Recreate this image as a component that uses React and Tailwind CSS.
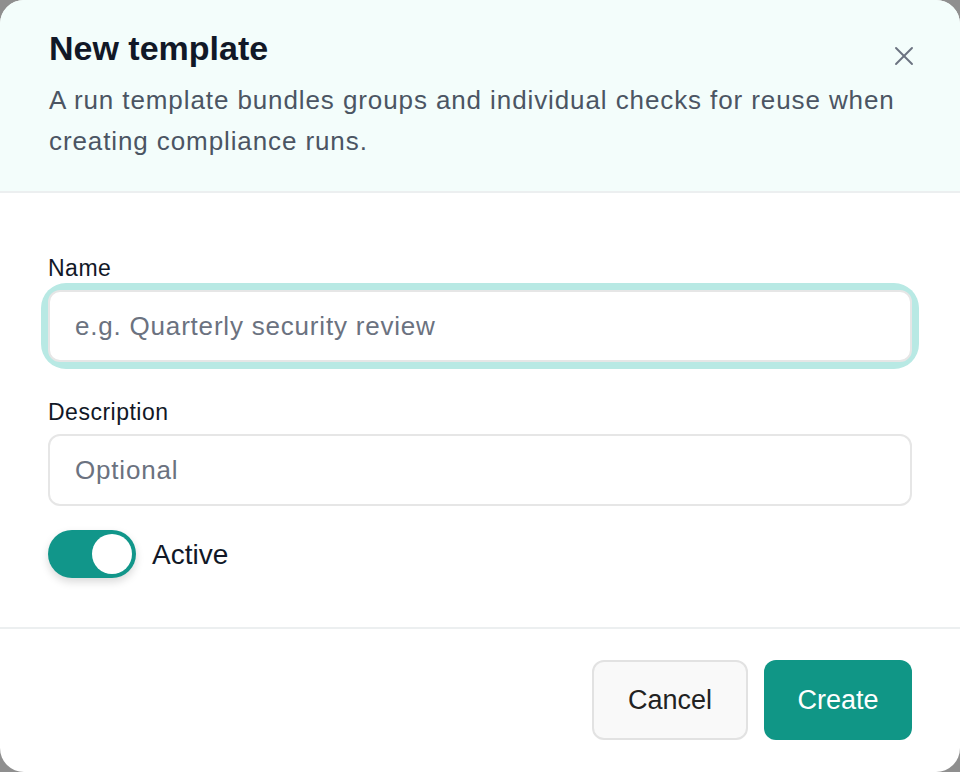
import { useState } from 'react';
import { X } from 'lucide-react';

const font = { fontFamily: '"Liberation Sans", Arial, Helvetica, sans-serif' };

function Field({ label, placeholder, focused }) {
  return (
    <div className="flex flex-col">
      <label className="text-[23px] leading-[28px] tracking-[0.5px] text-[#111827] mb-2">{label}</label>
      <div className={`rounded-[18px] ${focused ? 'ring-[7px] ring-[#b8e9e4]' : ''}`}>
        <input
          placeholder={placeholder}
          className="w-full h-[72px] rounded-[12px] border-2 border-[#e6e6e6] bg-white px-[25px] text-[26px] tracking-[0.8px] text-[#111827] placeholder:text-[#6b7280] outline-none"
          style={font}
        />
      </div>
    </div>
  );
}

export default function App() {
  const [active, setActive] = useState(true);

  return (
    <div className="w-[960px] h-[772px] bg-[#8f8f8f]" style={font}>
      <div className="h-full w-full bg-white rounded-[24px] overflow-hidden flex flex-col">
        {/* header */}
        <div className="relative bg-[#f3fdfb] border-b-2 border-[#eceff0] pl-[49px] pr-[48px] pt-[28px] pb-[29px]">
          <h2 className="text-[34px] leading-[40px] font-bold text-[#111827]">New template</h2>
          <p className="mt-3 text-[26px] leading-[41px] tracking-[0.9px] text-[#4b5563]">
            A run template bundles groups and individual checks for reuse when creating compliance runs.
          </p>
          <button className="absolute top-[40px] right-[40px] text-[#6b7280]">
            <X size={32} strokeWidth={1.4} />
          </button>
        </div>

        {/* body */}
        <div className="flex-1 px-[48px] pt-[61px] flex flex-col">
          <Field label="Name" placeholder="e.g. Quarterly security review" focused />
          <div className="mt-9">
            <Field label="Description" placeholder="Optional" />
          </div>
          <div className="mt-6 flex items-center gap-4">
            <button
              onClick={() => setActive(!active)}
              className={`w-[88px] h-[48px] rounded-full p-1 flex shadow-[0_4px_8px_rgba(0,0,0,0.15)] ${active ? 'bg-[#11968a] justify-end' : 'bg-gray-300 justify-start'}`}
            >
              <span className="w-10 h-10 rounded-full bg-white block" />
            </button>
            <span className="text-[28px] leading-[36px] text-[#111827] mt-[2px]">Active</span>
          </div>
        </div>

        {/* footer */}
        <div className="border-t-2 border-[#eceff0] px-[48px] pt-[31px] pb-[32px] flex justify-end gap-4">
          <button className="w-[156px] h-[80px] rounded-[12px] border-2 border-[#e2e2e2] bg-[#f9f9f9] text-[27px] text-[#222222]">
            Cancel
          </button>
          <button className="w-[148px] h-[80px] rounded-[12px] bg-[#109686] text-[27px] text-white">
            Create
          </button>
        </div>
      </div>
    </div>
  );
}
